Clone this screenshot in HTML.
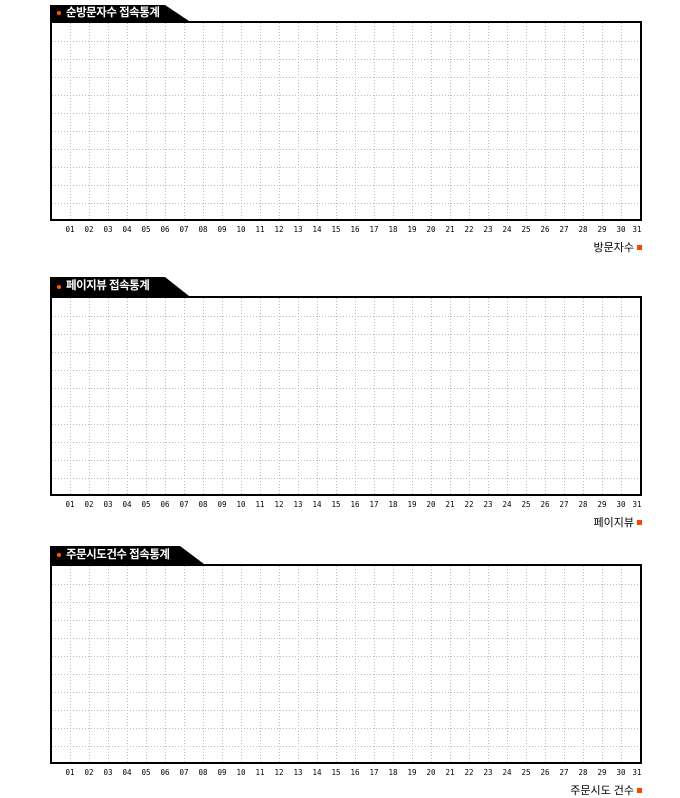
<!DOCTYPE html>
<html><head><meta charset="utf-8"><style>
body{margin:0;width:680px;height:796px;background:#fff;position:relative;overflow:hidden;font-family:"Liberation Sans","Noto Sans CJK KR",sans-serif}
.tab{position:absolute;left:50px}
.tab span{position:absolute;left:16px;color:#fff;font-size:11.5px;font-weight:bold;letter-spacing:-0.5px;white-space:nowrap}
.tab i{position:absolute;left:7px;width:4px;height:4px;border-radius:2px;background:#ff5a00}
.box{position:absolute;left:50px;width:588px;height:196px;border:2px solid #000}
.lab{position:absolute;font-size:7.5px;font-family:"DejaVu Sans Mono",monospace;color:#000;width:20px;text-align:center}
.leg{position:absolute;font-size:11px;color:#000}
.sq{position:absolute;left:637px;width:5px;height:5px;background:#ff4400}
</style></head><body>
<div id="c"></div>
<script>
var charts=[{t:5,top:21,th:17,title:"순방문자수 접속통계",w:115,legend:"방문자수"},{t:277,top:296,th:19,title:"페이지뷰 접속통계",w:115,legend:"페이지뷰"},{t:546,top:564,th:19,title:"주문시도건수 접속통계",w:130,legend:"주문시도 건수"}];
var h="";
charts.forEach(function(c){
 var top=c.top, th=c.top-c.t;
 h+='<svg class="tab" style="top:'+c.t+'px" width="'+(c.w+30)+'" height="'+th+'"><polygon points="0,0 '+c.w+',0 '+(c.w+24)+','+th+' 0,'+th+'" fill="#000"/></svg>';
 h+='<div class="tab" style="top:'+c.t+'px;width:'+c.w+'px;height:'+th+'px"><i style="top:'+(th/2-2)+'px"></i><span style="top:0;line-height:'+th+'px">'+c.title+'</span></div>';
 var g='<svg width="588" height="196" style="position:absolute;left:0;top:0">';
 for(var y=18;y<196;y+=18) g+='<line x1="0" x2="588" y1="'+(y+0.5)+'" y2="'+(y+0.5)+'" stroke="#bbb" stroke-dasharray="1,2"/>';
 for(var x=18;x<588;x+=19) g+='<line y1="0" y2="196" x1="'+(x+0.5)+'" x2="'+(x+0.5)+'" stroke="#bbb" stroke-dasharray="1,2"/>';
 g+='</svg>';
 h+='<div class="box" style="top:'+top+'px">'+g+'</div>';
 for(var i=1;i<=31;i++){var cx=70+19*(i-1);if(i==31)cx=637;
  h+='<div class="lab" style="left:'+(cx-10)+'px;top:'+(top+204)+'px">'+(i<10?'0'+i:i)+'</div>';}
 h+='<div class="leg" style="top:'+(top+218)+'px;right:46px">'+c.legend+'</div>';
 h+='<div class="sq" style="top:'+(top+224)+'px"></div>';
});
document.getElementById('c').innerHTML=h;
</script>
</body></html>
